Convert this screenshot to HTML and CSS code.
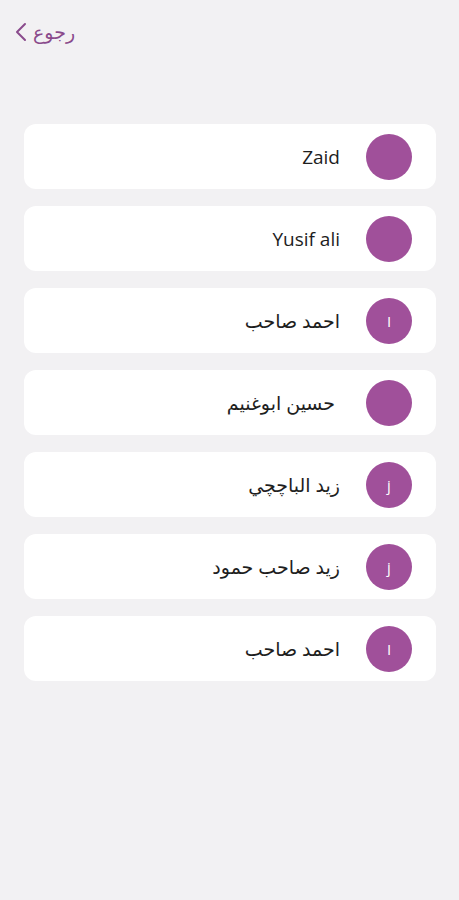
FILE: index.html
```html
<!DOCTYPE html>
<html lang="ar">
<head>
    <meta charset="UTF-8">
    <meta name="viewport" content="width=device-width, initial-scale=1.0">
    <title>جهات الاتصال</title>
    <link rel="stylesheet" href="styles.css">
</head>
<body>
    <div class="top-bar">
        <a class="back" href="#">
            <svg width="12" height="20" viewBox="0 0 12 20"><path d="M10 2 L2 10 L10 18" fill="none" stroke="currentColor" stroke-width="2" stroke-linecap="round" stroke-linejoin="round"/></svg>
            <span>رجوع</span>
        </a>
    </div>

    <div class="contacts">
        <div class="contact">
            <div class="avatar"></div>
            <div class="name">Zaid</div>
        </div>
        <div class="contact">
            <div class="avatar"></div>
            <div class="name">Yusif ali</div>
        </div>
        <div class="contact">
            <div class="avatar">I</div>
            <div class="name">احمد صاحب</div>
        </div>
        <div class="contact">
            <div class="avatar"></div>
            <div class="name"> حسين ابوغنيم</div>
        </div>
        <div class="contact">
            <div class="avatar">j</div>
            <div class="name">زيد الباچچي</div>
        </div>
        <div class="contact">
            <div class="avatar">j</div>
            <div class="name">زيد صاحب حمود</div>
        </div>
        <div class="contact">
            <div class="avatar">I</div>
            <div class="name">احمد صاحب</div>
        </div>
    </div>
</body>
</html>
```
FILE: styles.css
```css
body {
    margin: 0;
    background-color: #f2f1f3;
    font-family: "Open Sans", "DejaVu Sans", sans-serif;
    min-height: 100vh;
}
.top-bar {
    display: flex;
    padding: 21px 15px 0;
    height: 103px;
    box-sizing: border-box;
}
.back {
    display: flex;
    align-items: center;
    gap: 6px;
    height: 22px;
    color: #8a4b8c;
    text-decoration: none;
    font-size: 19px;
}
.contacts {
    display: flex;
    flex-direction: column;
    gap: 17px;
    padding: 21px 23px 0 24px;
}
.contact {
    direction: rtl;
    display: flex;
    align-items: center;
    gap: 26px;
    height: 65px;
    padding-right: 24px;
    background-color: #ffffff;
    border-radius: 12px;
}
.avatar {
    width: 46px;
    height: 46px;
    border-radius: 50%;
    background-color: #a0509a;
    color: #ffffff;
    font-size: 15px;
    display: flex;
    align-items: center;
    justify-content: center;
    flex-shrink: 0;
}
.name {
    font-size: 19px;
    color: #1e1e1e;
    white-space: pre;
}
```
